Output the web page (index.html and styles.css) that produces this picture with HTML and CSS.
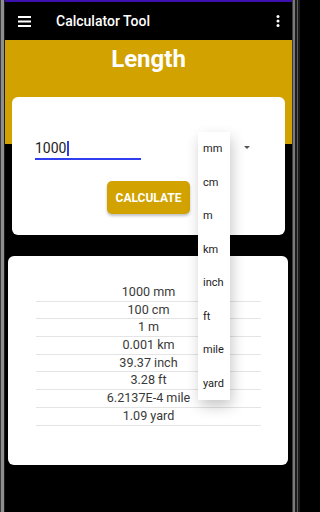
FILE: index.html
```html
<!DOCTYPE html>
<html lang="en">
<head>
<meta charset="utf-8">
<title>Calculator Tool</title>
<link rel="stylesheet" href="styles.css">
</head>
<body>
<div class="device">
  <div class="bezel-left"></div>
  <div class="screen">
    <div class="status"></div>
    <header class="toolbar">
      <svg class="hamburger" width="13" height="11" viewBox="0 0 13 11">
        <rect x="0" y="0" width="13" height="2" fill="#fff"/>
        <rect x="0" y="4.5" width="13" height="2" fill="#fff"/>
        <rect x="0" y="9" width="13" height="2" fill="#fff"/>
      </svg>
      <span class="title">Calculator Tool</span>
      <svg class="kebab" width="4" height="12" viewBox="0 0 4 12">
        <circle cx="2" cy="1.6" r="1.5" fill="#fff"/>
        <circle cx="2" cy="6" r="1.5" fill="#fff"/>
        <circle cx="2" cy="10.4" r="1.5" fill="#fff"/>
      </svg>
    </header>
    <main class="content">
      <h1 class="page-title">Length</h1>
      <section class="card input-card">
        <div class="input-row">
          <div class="field"><span class="value">1000</span><span class="cursor"></span></div>
          <div class="spinner-arrow"></div>
        </div>
        <div class="btn-row"><button class="calc">CALCULATE</button></div>
      </section>
      <section class="card result-card">
        <ul class="results">
          <li>1000 mm</li>
          <li>100 cm</li>
          <li>1 m</li>
          <li>0.001 km</li>
          <li>39.37 inch</li>
          <li>3.28 ft</li>
          <li>6.2137E-4 mile</li>
          <li>1.09 yard</li>
        </ul>
      </section>
    </main>
    <ul class="menu">
      <li>mm</li>
      <li>cm</li>
      <li>m</li>
      <li>km</li>
      <li>inch</li>
      <li>ft</li>
      <li>mile</li>
      <li>yard</li>
    </ul>
  </div>
  <div class="bezel-right"></div>
</div>
</body>
</html>
```

FILE: styles.css
```css
* { box-sizing: border-box; }
html, body {
  margin: 0;
  padding: 0;
  background: #000;
  font-family: Roboto, "Liberation Sans", sans-serif;
  overflow: hidden;
}
.device {
  display: flex;
  width: 300px;
  height: 512px;
  overflow: hidden;
}
.bezel-left {
  width: 5px;
  flex: none;
  background: linear-gradient(to right, #3a3a3a 0, #3a3a3a 1.5px, #8e8e8e 1.5px, #8e8e8e 4px, #1e1e1e 4px);
}
.bezel-right {
  width: 8px;
  flex: none;
  background: linear-gradient(to right, #3c3c3c 0, #3c3c3c 1.5px, #7a7a7a 1.5px, #7a7a7a 3px, #1c1c1c 3px, #1c1c1c 5px, #5e5e5e 5px, #5e5e5e 6px, #1a1a1a 6px);
}
.screen {
  position: relative;
  width: 287px;
  flex: none;
  background: #000;
  overflow: hidden;
}
.status {
  height: 2px;
  background: #3d10b0;
}
.toolbar {
  height: 38px;
  display: flex;
  align-items: center;
  background: #000;
}
.hamburger {
  margin-left: 13px;
  flex: none;
}
.title {
  margin-left: 25px;
  color: #fff;
  font-size: 14px;
  font-weight: 500;
}
.kebab {
  margin-left: auto;
  margin-right: 12px;
  flex: none;
}
.content {
  background: linear-gradient(to bottom, #d1a200 0, #d1a200 104px, #000 104px);
  padding-bottom: 60px;
}
.page-title {
  margin: 0 0 19px;
  height: 38px;
  line-height: 38px;
  text-align: center;
  color: #fff;
  font-size: 24px;
  font-weight: 700;
}
.card {
  background: #fff;
  border-radius: 6px;
}
.input-card {
  margin: 0 7px;
}
.input-row {
  display: flex;
  align-items: flex-start;
  padding-top: 41px;
}
.field {
  margin-left: 23px;
  width: 106px;
  height: 22px;
  line-height: 20px;
  border-bottom: 2px solid #2f3ff0;
  font-size: 14px;
  color: #222;
  display: flex;
  align-items: center;
}
.cursor {
  display: inline-block;
  width: 1.5px;
  height: 15px;
  margin-left: 1px;
  background: #2f3ff0;
}
.spinner-arrow {
  margin-left: auto;
  margin-right: 35px;
  margin-top: 8px;
  width: 0;
  height: 0;
  border-left: 3px solid transparent;
  border-right: 3px solid transparent;
  border-top: 3px solid #555;
}
.btn-row {
  display: flex;
  justify-content: center;
  margin-top: 21px;
  padding-bottom: 21px;
}
.calc {
  width: 83px;
  height: 33px;
  border: none;
  border-radius: 5px;
  background: #d1a200;
  color: #fff;
  font-family: Roboto, "Liberation Sans", sans-serif;
  font-size: 12px;
  font-weight: 700;
  padding: 0;
  box-shadow: 0 2px 3px rgba(0, 0, 0, 0.25);
}
.result-card {
  margin: 21px 4px 0 3px;
  padding: 28px 27px 39px 28px;
}
.results {
  list-style: none;
  margin: 0;
  padding: 0;
}
.results li {
  height: 17.7px;
  line-height: 16.7px;
  border-bottom: 1px solid #e4e4e4;
  text-align: center;
  font-size: 12.6px;
  color: #3a3a3a;
}
.menu {
  position: absolute;
  left: 193px;
  top: 132px;
  width: 32px;
  margin: 0;
  padding: 0;
  list-style: none;
  background: #fff;
  box-shadow: 2px 6px 14px rgba(0, 0, 0, 0.22);
}
.menu li {
  height: 33.5px;
  line-height: 33.5px;
  padding-left: 5px;
  font-size: 11px;
  color: #222;
}
```
